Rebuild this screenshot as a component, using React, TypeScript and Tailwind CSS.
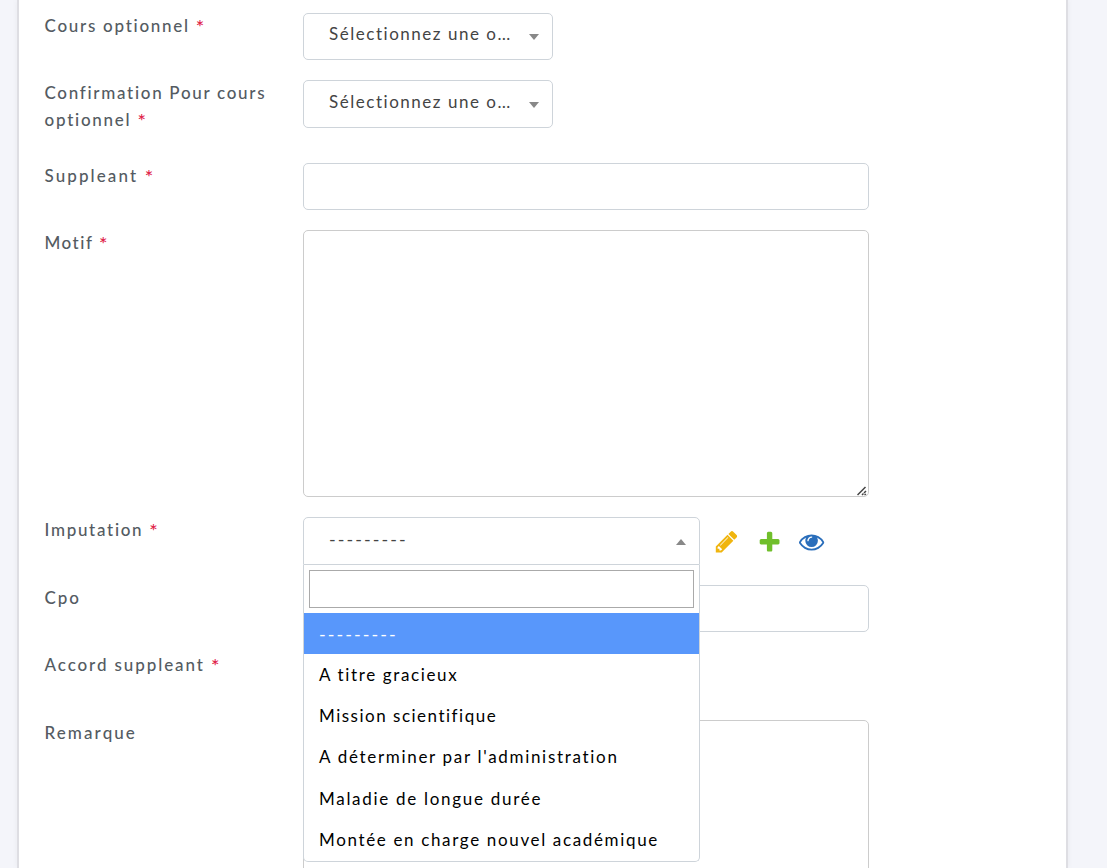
import React from "react";

function Label({ text, tracking, required = true }: { text: string; tracking: string; required?: boolean }) {
  return (
    <span className={`whitespace-nowrap ${tracking}`}>
      {text}
      {required && (
        <>
          {" "}
          <span className="inline-block h-[20px] align-top text-[20px] leading-[28px] text-[#e0244a]">*</span>
        </>
      )}
    </span>
  );
}

function Row({ height, label, children }: { height: string; label: React.ReactNode; children?: React.ReactNode }) {
  return (
    <div className={`flex shrink-0 items-start ${height}`}>
      <div className="-mt-px flex w-[259px] shrink-0 flex-col pl-[0.5px] text-[17px] leading-[27px] font-medium text-[#545b62]">{label}</div>
      {children}
    </div>
  );
}

function Arrow({ up = false }: { up?: boolean }) {
  return (
    <svg className="h-[6px] w-[10px] fill-[#888]" viewBox="0 0 10 6">
      <path d={up ? "M0 6L5 0L10 6Z" : "M0 0H10L5 6Z"} />
    </svg>
  );
}

function Select({ height, pad }: { height: string; pad: string }) {
  return (
    <div className={`flex w-[250px] items-start justify-between rounded-[5px] border border-[#ced4da] pr-[13px] pl-[25px] ${height} ${pad}`}>
      <span className="text-[17px] leading-[27px] tracking-[1.53px] whitespace-nowrap text-[#444]">Sélectionnez une o…</span>
      <span className="flex h-[33px] items-center">
        <Arrow />
      </span>
    </div>
  );
}

const options = [
  { text: "A titre gracieux", style: "tracking-[1.63px]" },
  { text: "Mission scientifique", style: "tracking-[1.5px]" },
  { text: "A déterminer par l'administration", style: "tracking-[1.69px]" },
  { text: "Maladie de longue durée", style: "tracking-[1.71px]" },
  { text: "Montée en charge nouvel académique", style: "tracking-[1.65px]" },
];

function Imputation() {
  return (
    <div className="relative h-[48px] w-[397px] rounded-t-[5px] border border-[#ced4da]">
      <div className="flex h-full items-start justify-between pt-[7px] pr-[13px] pl-[25px]">
        <span className="pt-px text-[18px] leading-[27px] tracking-[2.05px] text-[#444]">---------</span>
        <span className="flex h-[34px] items-center">
          <Arrow up />
        </span>
      </div>
      <div className="absolute top-[47px] -left-px z-10 h-[297px] w-[397px] overflow-hidden rounded-b-[5px] border border-t-0 border-[#ced4da] bg-white text-[17px] text-black">
        <div className="p-[5px]">
          <input className="block h-[38px] w-full border border-[#aaa] outline-none" />
        </div>
        <div className="h-[41px] bg-[#5897fb] pl-[15px] text-[18px] leading-[42px] tracking-[2.05px] text-white">---------</div>
        {options.map((o) => (
          <div key={o.text} className={`h-[41.2px] pl-[15px] leading-[41px] whitespace-nowrap ${o.style}`}>
            {o.text}
          </div>
        ))}
      </div>
    </div>
  );
}

const PENCIL =
  "M491 1536l91-91-235-235-91 91v107h128v128h107zm523-928q0-22-22-22-10 0-17 7l-542 542q-7 7-7 17 0 22 22 22 10 0 17-7l542-542q7-7 7-17zm-54-192l416 416-832 832h-416v-416zm683 96q0 53-37 90l-166 166-416-416 166-165q36-38 90-38 53 0 91 38l235 234q37 39 37 91z";
const PLUS =
  "M1600 736v192q0 40-28 68t-68 28h-416v416q0 40-28 68t-68 28h-192q-40 0-68-28t-28-68v-416h-416q-40 0-68-28t-28-68v-192q0-40 28-68t68-28h416v-416q0-40 28-68t68-28h192q40 0 68 28t28 68v416h416q40 0 68 28t28 68z";
const EYE =
  "M1664 960q-152-236-381-353 61 104 61 225 0 185-131.5 316.5t-316.5 131.5-316.5-131.5-131.5-316.5q0-121 61-225-229 117-381 353 133 205 333.5 326.5t434.5 121.5 434.5-121.5 333.5-326.5zm-720-384q0-20-14-34t-34-14q-125 0-214.5 89.5t-89.5 214.5q0 20 14 34t34 14 34-14 14-34q0-86 61-147t147-61q20 0 34-14t14-34zm848 384q0 34-20 69-140 230-376.5 368.5t-499.5 138.5-499.5-139-376.5-368q-20-35-20-69t20-69q140-229 376.5-368t499.5-139 499.5 139 376.5 368q20 35 20 69z";

function Icon({ d, color }: { d: string; color: string }) {
  return (
    <svg className={`size-[25.2px] ${color}`} viewBox="0 0 1792 1792">
      <path d={d} />
    </svg>
  );
}

export default function App() {
  return (
    <div className="h-[868px] overflow-hidden bg-[#f4f5fa] px-[17px] font-['Lato','Noto_Sans',sans-serif]">
      <main className="flex h-full w-[1051px] flex-col border-x-2 border-[#dedee3] bg-white pt-[13px] pl-[25px] shadow-[0_0_6px_rgba(0,0,0,0.05)]">
        <Row height="h-[67px]" label={<Label text="Cours optionnel" tracking="tracking-[1.73px]" />}>
          <Select height="h-[47px]" pad="pt-[6px]" />
        </Row>
        <Row
          height="h-[83px]"
          label={
            <>
              <Label text="Confirmation Pour cours" tracking="tracking-[1.7px]" required={false} />
              <Label text="optionnel" tracking="tracking-[1.75px]" />
            </>
          }
        >
          <Select height="h-[48px]" pad="pt-[7px]" />
        </Row>
        <Row height="h-[67px]" label={<Label text="Suppleant" tracking="tracking-[2.1px]" />}>
          <input className="h-[47px] w-[566px] rounded-[5px] border border-[#ced4da] outline-none" />
        </Row>
        <Row height="h-[287px]" label={<Label text="Motif" tracking="tracking-[1.5px]" />}>
          <div className="relative h-[267px] w-[566px]">
            <textarea className="block h-full w-full resize-none rounded-[5px] border border-[#ccc] outline-none" />
            <svg className="absolute right-[2px] bottom-px h-[10px] w-[10px] stroke-[#444]" viewBox="0 0 10 10" fill="none" strokeWidth="1.5">
              <path d="M0.5 9L8.5 1M5 9L6.5 7.5M7 7L9 5M7.5 9L9 8" />
            </svg>
          </div>
        </Row>
        <Row height="h-[68px]" label={<Label text="Imputation" tracking="tracking-[1.7px]" />}>
          <Imputation />
          <div className="flex pt-[12px] pl-[14px]">
            <Icon d={PENCIL} color="fill-[#f0b50f]" />
            <span className="w-[18px]" />
            <span className="pt-px">
              <Icon d={PLUS} color="fill-[#70bf2b]" />
            </span>
            <span className="w-[17px]" />
            <Icon d={EYE} color="fill-[#2a6ebb]" />
          </div>
        </Row>
        <Row height="h-[67px]" label={<Label text="Cpo" tracking="tracking-[2px]" required={false} />}>
          <input className="h-[47px] w-[566px] rounded-[5px] border border-[#ced4da] outline-none" />
        </Row>
        <Row height="h-[68px]" label={<Label text="Accord suppleant" tracking="tracking-[1.9px]" />} />
        <Row height="h-[268px]" label={<Label text="Remarque" tracking="tracking-[2.1px]" required={false} />}>
          <textarea className="h-[267px] w-[566px] resize-none rounded-[5px] border border-[#ccc] outline-none" />
        </Row>
      </main>
    </div>
  );
}
